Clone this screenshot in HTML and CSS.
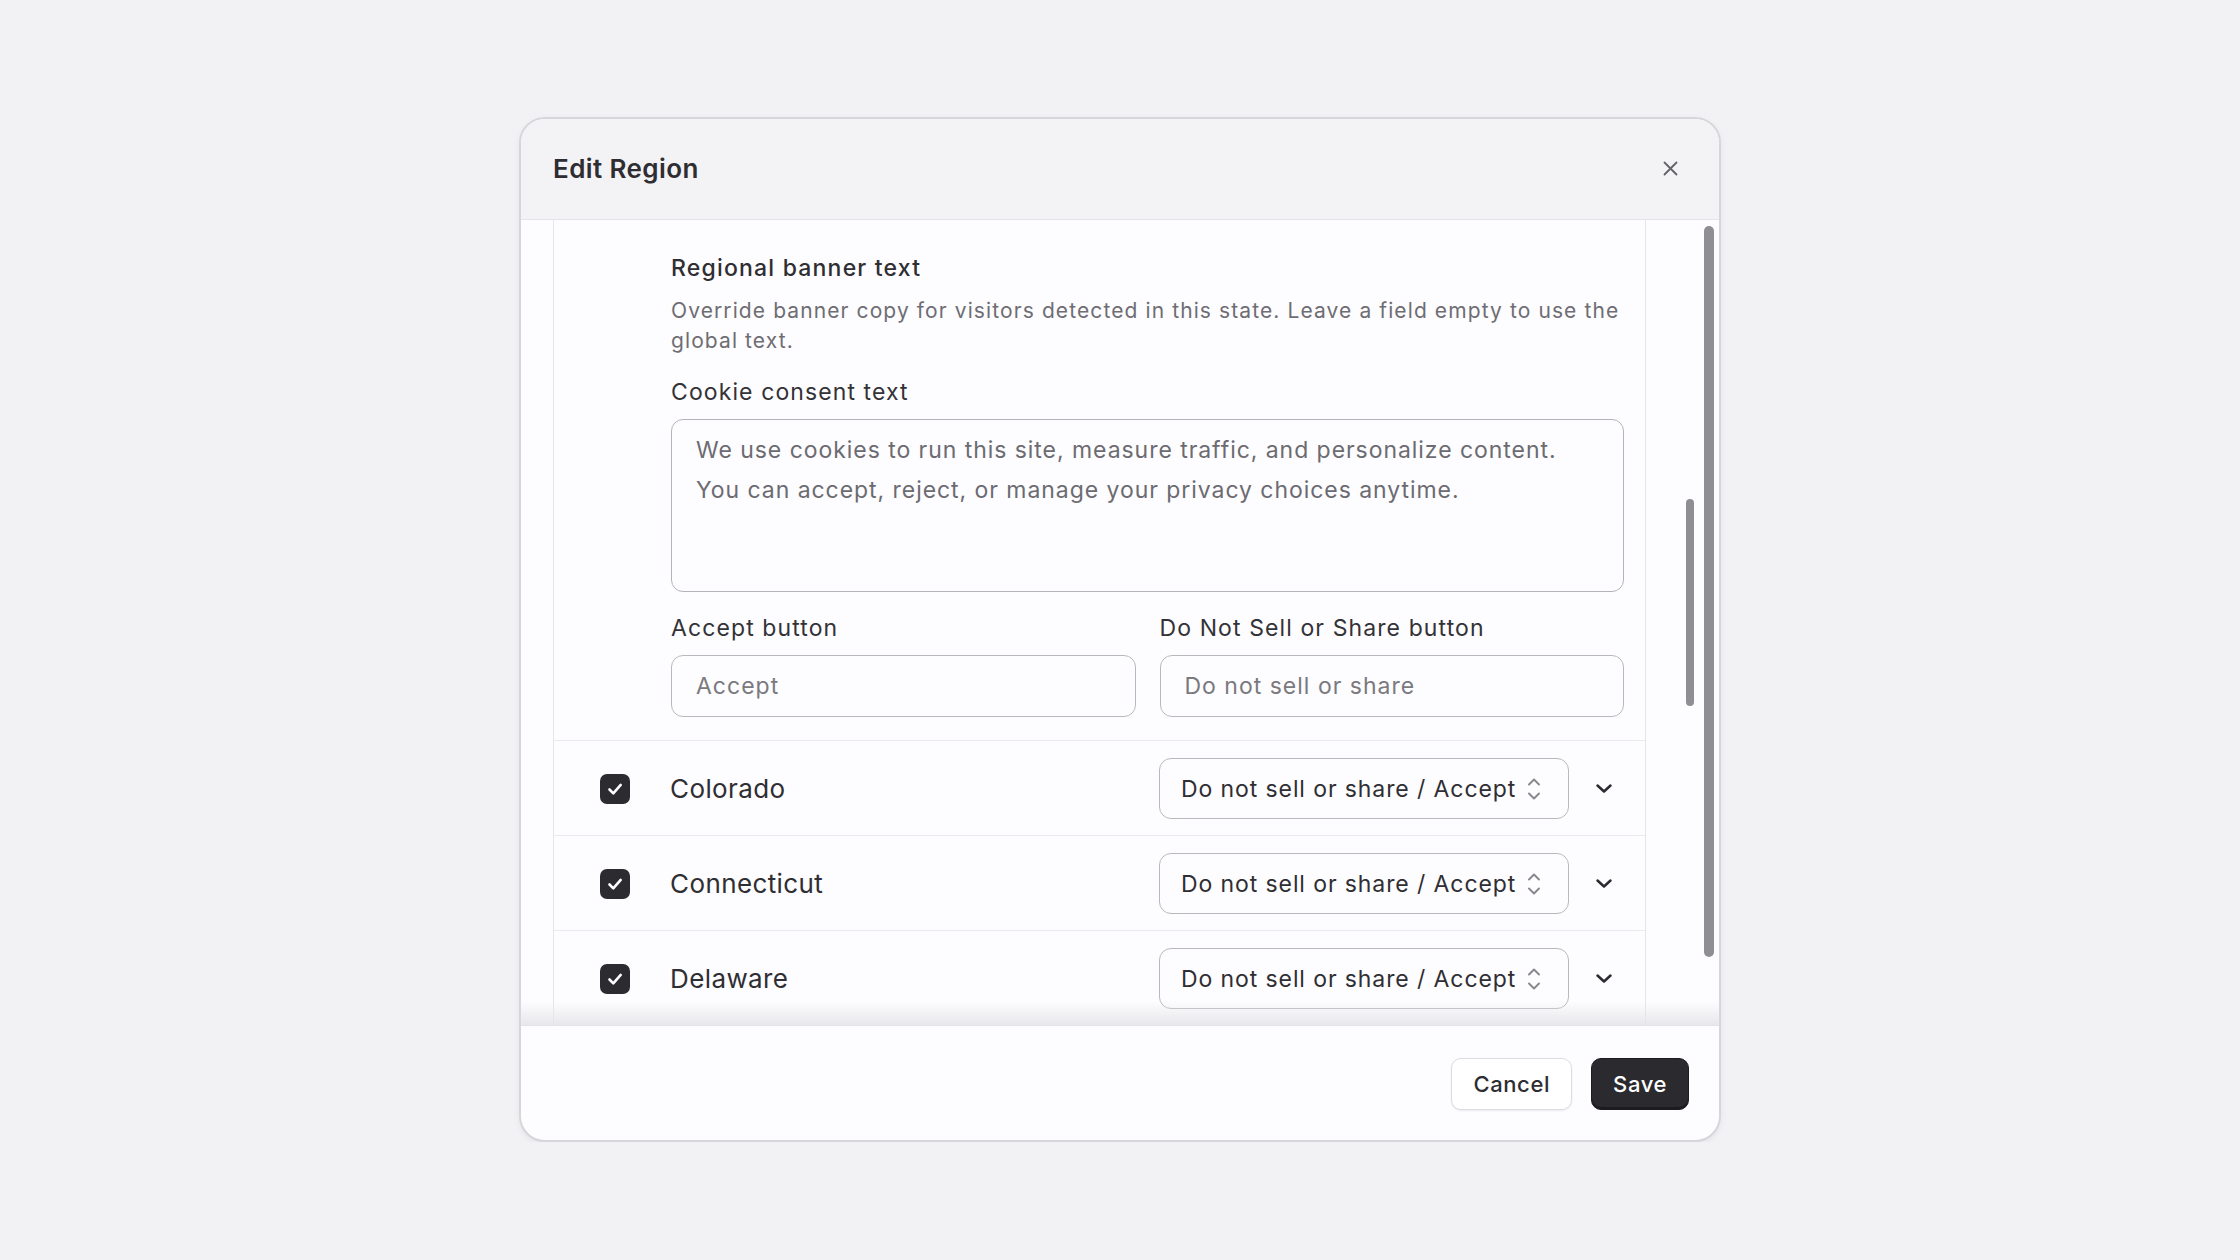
FILE: index.html
```html
<!DOCTYPE html>
<html lang="en">
<head>
    <meta charset="UTF-8">
    <meta name="viewport" content="width=device-width, initial-scale=1.0">
    <title>Edit Region</title>

    <link rel="stylesheet" href="styles.css">
</head>
<body>
    <div class="page">
        <div class="modal">
            <header class="modal-head">
                <h2>Edit Region</h2>
                <button class="close" title="Close">
                    <svg width="15" height="15" viewBox="0 0 15 15"><path d="M1.5 1.5l12 12M13.5 1.5l-12 12" stroke="#636267" stroke-width="1.8" stroke-linecap="round"/></svg>
                </button>
            </header>

            <div class="modal-body">
                <div class="region-list">
                    <!-- 펼쳐진 주(state)의 배너 문구 설정 -->
                    <section class="banner-panel">
                        <h3>Regional banner text</h3>
                        <p class="hint">Override banner copy for visitors detected in this state. Leave a field empty to use the<br>global text.</p>

                        <label class="field-label">Cookie consent text</label>
                        <textarea class="consent">We use cookies to run this site, measure traffic, and personalize content.
You can accept, reject, or manage your privacy choices anytime.</textarea>

                        <div class="btn-fields">
                            <div>
                                <label class="field-label">Accept button</label>
                                <input type="text" placeholder="Accept">
                            </div>
                            <div>
                                <label class="field-label">Do Not Sell or Share button</label>
                                <input type="text" placeholder="Do not sell or share">
                            </div>
                        </div>
                    </section>

                    <div class="state-row">
                        <span class="check"><svg width="30" height="30" viewBox="0 0 30 30"><rect width="30" height="30" rx="7" fill="#2c2b30"/><path d="M9.5 15.5l3.8 3.8 7.4-8.4" fill="none" stroke="#fff" stroke-width="2.6" stroke-linecap="round" stroke-linejoin="round"/></svg></span>
                        <span class="state-name">Colorado</span>
                        <div class="select">
                            <span>Do not sell or share / Accept</span>
                            <svg width="14" height="26" viewBox="0 0 14 26"><path d="M2 8.5L7 3.5l5 5M2 17.5l5 5 5-5" fill="none" stroke="#88878c" stroke-width="1.9" stroke-linecap="round" stroke-linejoin="round"/></svg>
                        </div>
                        <button class="expand"><svg width="18" height="11" viewBox="0 0 18 11"><path d="M2.5 2.5L9 8.5l6.5-6" fill="none" stroke="#2c2b30" stroke-width="2.5" stroke-linecap="round" stroke-linejoin="round"/></svg></button>
                    </div>

                    <div class="state-row">
                        <span class="check"><svg width="30" height="30" viewBox="0 0 30 30"><rect width="30" height="30" rx="7" fill="#2c2b30"/><path d="M9.5 15.5l3.8 3.8 7.4-8.4" fill="none" stroke="#fff" stroke-width="2.6" stroke-linecap="round" stroke-linejoin="round"/></svg></span>
                        <span class="state-name">Connecticut</span>
                        <div class="select">
                            <span>Do not sell or share / Accept</span>
                            <svg width="14" height="26" viewBox="0 0 14 26"><path d="M2 8.5L7 3.5l5 5M2 17.5l5 5 5-5" fill="none" stroke="#88878c" stroke-width="1.9" stroke-linecap="round" stroke-linejoin="round"/></svg>
                        </div>
                        <button class="expand"><svg width="18" height="11" viewBox="0 0 18 11"><path d="M2.5 2.5L9 8.5l6.5-6" fill="none" stroke="#2c2b30" stroke-width="2.5" stroke-linecap="round" stroke-linejoin="round"/></svg></button>
                    </div>

                    <div class="state-row">
                        <span class="check"><svg width="30" height="30" viewBox="0 0 30 30"><rect width="30" height="30" rx="7" fill="#2c2b30"/><path d="M9.5 15.5l3.8 3.8 7.4-8.4" fill="none" stroke="#fff" stroke-width="2.6" stroke-linecap="round" stroke-linejoin="round"/></svg></span>
                        <span class="state-name">Delaware</span>
                        <div class="select">
                            <span>Do not sell or share / Accept</span>
                            <svg width="14" height="26" viewBox="0 0 14 26"><path d="M2 8.5L7 3.5l5 5M2 17.5l5 5 5-5" fill="none" stroke="#88878c" stroke-width="1.9" stroke-linecap="round" stroke-linejoin="round"/></svg>
                        </div>
                        <button class="expand"><svg width="18" height="11" viewBox="0 0 18 11"><path d="M2.5 2.5L9 8.5l6.5-6" fill="none" stroke="#2c2b30" stroke-width="2.5" stroke-linecap="round" stroke-linejoin="round"/></svg></button>
                    </div>
                </div>

                <!-- 스크롤바 모양 -->
                <span class="thumb thumb-inner"></span>
                <span class="thumb thumb-outer"></span>
                <span class="fade"></span>
            </div>

            <footer class="modal-foot">
                <button class="btn">Cancel</button>
                <button class="btn btn-dark">Save</button>
            </footer>
        </div>
    </div>
</body>
</html>
```

FILE: styles.css
```css
* {
    margin:0;
    padding:0;
    box-sizing:border-box;
}

body {
    background:#f2f1f4;
    font-family:Inter, "Noto Sans", sans-serif;
    color:#2e2d32;
}

button, input, textarea {
    font-family:inherit;
}

.page {
    display:flex;
    justify-content:center;
    padding-top:117px;
}

.modal {
    width:1202px;
    border:2px solid #d7d6da;
    border-radius:26px;
    background:#fdfcfe;
    overflow:hidden;
    box-shadow:0 2px 6px rgba(0,0,0,0.06);
}

/* header */
.modal-head {
    display:flex;
    align-items:center;
    justify-content:space-between;
    height:101px;
    padding:0 41px 2px 32px;
    background:#f3f2f5;
    border-bottom:1px solid #e4e3e7;
}

.modal-head h2 {
    font-size:26px;
    font-weight:600;
    letter-spacing:0.4px;
    color:#2e2d32;
}

.close {
    display:flex;
    border:none;
    background:none;
}

/* body */
.modal-body {
    position:relative;
    height:805px;
    overflow:hidden;
}

.region-list {
    width:1093px;
    min-height:100%;
    margin-left:32px;
    border-left:1px solid #e6e5e9;
    border-right:1px solid #e6e5e9;
}

.banner-panel {
    padding:33px 21px 23px 117px;
    border-bottom:1px solid #ebeaee;
}

.banner-panel h3 {
    font-size:23px;
    line-height:30px;
    font-weight:500;
    letter-spacing:1.2px;
    color:#2f2e33;
}

.hint {
    margin-top:13px;
    font-size:21px;
    line-height:30px;
    letter-spacing:1.1px;
    color:#6e6d73;
}

.field-label {
    display:block;
    margin-top:21px;
    font-size:23px;
    line-height:30px;
    letter-spacing:1.1px;
    color:#333237;
}

.consent {
    display:block;
    width:100%;
    height:173px;
    margin-top:12px;
    padding:10px 24px;
    border:1px solid #b4b3b8;
    border-radius:12px;
    background:#fdfcfe;
    font-size:23px;
    line-height:40px;
    letter-spacing:0.95px;
    color:#6c6b71;
    resize:none;
    outline:none;
}

.btn-fields {
    display:grid;
    grid-template-columns:1fr 1fr;
    gap:24px;
}

.btn-fields input {
    display:block;
    width:100%;
    height:62px;
    margin-top:12px;
    padding:0 24px;
    border:1px solid #b9b8bd;
    border-radius:12px;
    background:#fdfcfe;
    font-size:23px;
    letter-spacing:1px;
    outline:none;
}

.btn-fields input::placeholder {
    color:#7a797e;
}

/* state rows */
.state-row {
    display:flex;
    align-items:center;
    height:95px;
    padding:1px 21px 0 46px;
    border-bottom:1px solid #ebeaee;
}

.check {
    display:flex;
}

.state-name {
    flex:1;
    margin-left:40px;
    font-size:26px;
    letter-spacing:0.4px;
    color:#2f2e33;
}

.select {
    display:flex;
    align-items:center;
    justify-content:space-between;
    width:410px;
    height:61px;
    padding:0 27px 0 21px;
    border:1px solid #b9b8bd;
    border-radius:12px;
    background:#fdfcfe;
    font-size:23px;
    letter-spacing:0.9px;
    color:#2f2e33;
}

.expand {
    display:flex;
    align-items:center;
    justify-content:center;
    width:40px;
    margin-left:15px;
    border:none;
    background:none;
}

.thumb {
    position:absolute;
    background:#8f8e93;
    border-radius:6px;
}

.thumb-outer {
    top:6px;
    right:5px;
    width:10px;
    height:731px;
}

.thumb-inner {
    top:279px;
    right:25px;
    width:8px;
    height:207px;
}

.fade {
    position:absolute;
    left:0;
    right:0;
    bottom:0;
    height:24px;
    background:linear-gradient(rgba(232,231,235,0), rgba(228,227,231,0.85));
}

/* footer */
.modal-foot {
    display:flex;
    align-items:center;
    justify-content:flex-end;
    gap:19px;
    height:115px;
    padding:2px 30px 0 0;
    border-top:1px solid #e3e2e6;
}

.btn {
    height:52px;
    padding:0 21px;
    border:1px solid #dddce0;
    border-radius:10px;
    background:#fff;
    font-size:22px;
    font-weight:500;
    letter-spacing:0.6px;
    color:#2e2d32;
    box-shadow:0 1px 2px rgba(0,0,0,0.08);
}

.btn-dark {
    background:#2b2a2f;
    border-color:#1c1b1f;
    color:#fff;
    box-shadow:inset 0 -2px 0 rgba(0,0,0,0.35);
}
```
